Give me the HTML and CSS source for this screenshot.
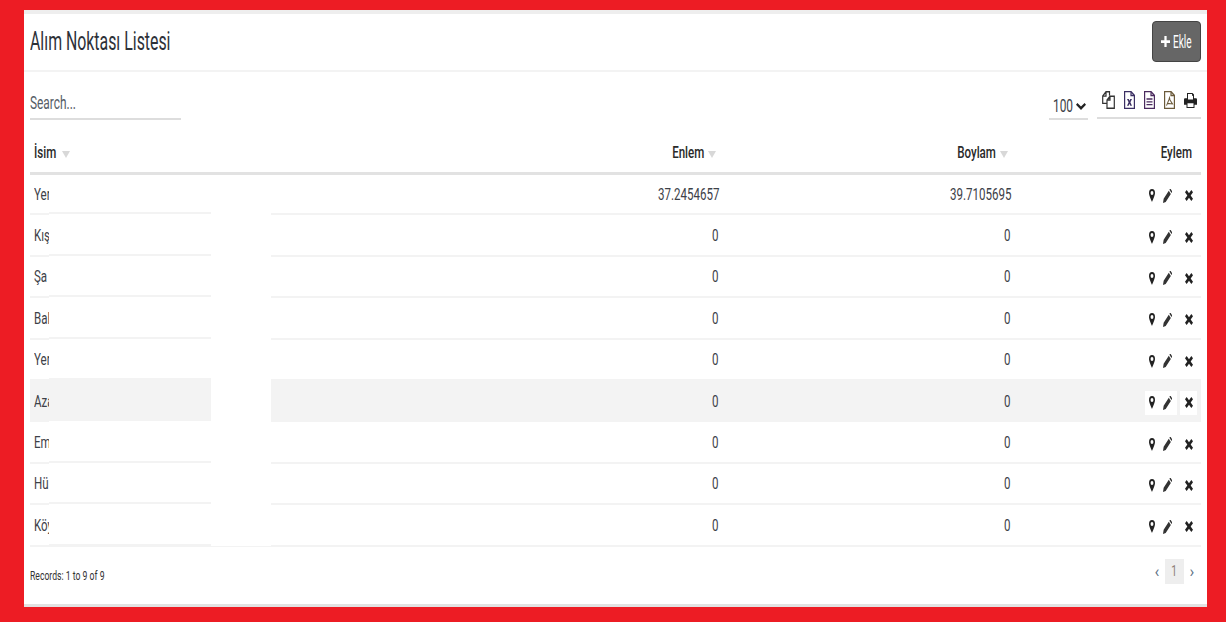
FILE: index.html
```html
<!DOCTYPE html>
<html lang="tr">
<head>
  <meta charset="utf-8">
  <title>Alım Noktası Listesi</title>
  <link rel="stylesheet" href="styles.css">
</head>
<body>
  <svg class="icon-defs" width="0" height="0" aria-hidden="true">
    <symbol id="i-marker" viewBox="0 0 10 16" preserveAspectRatio="none"><path fill-rule="evenodd" d="M5 0a5 5 0 0 1 5 5c0 2.6-3.4 8.300-5 11C3.400 13.300 0 7.600 0 5a5 5 0 0 1 5-5zm0 2.600a2.400 2.400 0 1 0 0 4.800 2.400 2.400 0 0 0 0-4.800z"/></symbol>
    <symbol id="i-pencil" viewBox="0 0 14 14" preserveAspectRatio="none"><path d="M0 14l1-4.200 8-8 3.200 3.200-8 8zM10 .8l.7-.7a1 1 0 0 1 1.300 0l1.900 1.900a1 1 0 0 1 0 1.300l-.7.700z"/></symbol>
    <symbol id="i-times" viewBox="0 0 12 12" preserveAspectRatio="none"><path d="M0 2.500L2.500 0 6 3.500 9.500 0 12 2.500 8.500 6 12 9.500 9.500 12 6 8.500 2.500 12 0 9.500 3.500 6z"/></symbol>
    <symbol id="i-plus" viewBox="0 0 12 12" preserveAspectRatio="none"><path d="M4.500 0h3v4.500H12v3H7.500V12h-3V7.500H0v-3h4.500z"/></symbol>
    <symbol id="i-chevron" viewBox="0 0 12 8" preserveAspectRatio="none"><path d="M0 2l1.700-2L6 4 10.300 0 12 2 6 8z"/></symbol>
    <symbol id="i-copy" viewBox="0 0 13 16" preserveAspectRatio="none"><path fill="none" stroke="currentColor" stroke-width="1.200" d="M4.500 11H.7V4.500L4 .7h3.500V4M4 .7v3.800H.7M5 15.300V8L8 4.700h4.300v10.600zM8 4.700V8H5"/></symbol>
    <symbol id="i-excel" viewBox="0 0 11 16" preserveAspectRatio="none"><path fill="none" stroke="currentColor" stroke-width="1.200" d="M.6.6h6.500l3.300 3.300v11.500H.6zM7 .6V4h3.400"/><path d="M3 7h1.800L5.500 8.600 6.300 7H8L6.400 10 8 13H6.300l-.8-1.700-.8 1.700H3L4.600 10z"/></symbol>
    <symbol id="i-text" viewBox="0 0 11 16" preserveAspectRatio="none"><path fill="none" stroke="currentColor" stroke-width="1.200" d="M.6.6h6.500l3.300 3.300v11.500H.6zM7 .6V4h3.400"/><path d="M2.500 6.500h6v1.200h-6zM2.500 9h6v1.200h-6zM2.500 11.500h6v1.200h-6z"/></symbol>
    <symbol id="i-pdf" viewBox="0 0 11 16" preserveAspectRatio="none"><path fill="none" stroke="currentColor" stroke-width="1.200" d="M.6.6h6.500l3.300 3.300v11.500H.6zM7 .6V4h3.400"/><path fill="none" stroke="currentColor" d="M2.500 13L5 7.500 5.500 6l.5 2 2.500 3.500-5-.5"/></symbol>
    <symbol id="i-print" viewBox="0 0 13 14" preserveAspectRatio="none"><path fill-rule="evenodd" d="M3 0h5.500L10 1.500V5h2a1 1 0 0 1 1 1v5h-2.500v3h-8v-3H0V6a1 1 0 0 1 1-1h2zM4 1v5h5V2.500H8V1zM3.500 9.500V13h6V9.500z"/></symbol>
  </svg>

  <div class="panel">
    <header class="panel-head">
      <h1 class="title"><span class="sq">Alım Noktası Listesi</span></h1>
      <button class="add-btn"><svg class="plus"><use href="#i-plus"/></svg><span class="sq">Ekle</span></button>
    </header>

    <div class="toolbar">
      <div class="search"><span class="sq">Search...</span></div>
      <div class="tools">
        <div class="page-size"><span class="sq">100</span><svg class="chevron"><use href="#i-chevron"/></svg></div>
        <div class="exports">
          <svg class="exp exp-copy"><use href="#i-copy"/></svg>
          <svg class="exp exp-excel"><use href="#i-excel"/></svg>
          <svg class="exp exp-text"><use href="#i-text"/></svg>
          <svg class="exp exp-pdf"><use href="#i-pdf"/></svg>
          <svg class="exp exp-print"><use href="#i-print"/></svg>
        </div>
      </div>
    </div>

    <div class="table-wrap">
      <table class="points">
        <colgroup><col class="c-name"><col class="c-lat"><col class="c-lng"><col class="c-act"></colgroup>
        <thead>
          <tr>
            <th class="left"><span class="sq">İsim</span><i class="sort sort-left"></i></th>
            <th class="num"><span class="sq-r">Enlem</span><i class="sort"></i></th>
            <th class="num"><span class="sq-r">Boylam</span><i class="sort"></i></th>
            <th class="num act-head"><span class="sq-r">Eylem</span></th>
          </tr>
        </thead>
        <tbody id="rows"></tbody>
      </table>
      <div class="redact" id="redact"></div>
    </div>

    <footer class="panel-foot">
      <span class="records"><span class="sq">Records: 1 to 9 of 9</span></span>
      <div class="pager">
        <span class="arrow">‹</span>
        <span class="current"><span class="sq-c">1</span></span>
        <span class="arrow">›</span>
      </div>
    </footer>
  </div>

  <script>
    var points = [
      ['Yer', '37.2454657', '39.7105695'],
      ['Kış', '0', '0'],
      ['Şa', '0', '0'],
      ['Bal', '0', '0'],
      ['Yer', '0', '0'],
      ['Aza', '0', '0'],
      ['Em', '0', '0'],
      ['Hü', '0', '0'],
      ['Köy', '0', '0']
    ];
    var hoverRow = 5;

    var html = '';
    var patch = '';
    points.forEach(function (p, i) {
      var cls = i === hoverRow ? ' class="hover"' : '';
      html += '<tr' + cls + '><td><span class="sq">' + p[0] + '</span></td>' +
        '<td class="num"><span class="sq-r">' + p[1] + '</span></td>' +
        '<td class="num"><span class="sq-r">' + p[2] + '</span></td>' +
        '<td class="actions"><span class="act-group">' +
        '<svg class="a-marker"><use href="#i-marker"/></svg>' +
        '<svg class="a-pencil"><use href="#i-pencil"/></svg></span>' +
        '<span class="act-single"><svg class="a-times"><use href="#i-times"/></svg></span></td></tr>';
      patch += '<div class="patch-row' + (i === hoverRow ? ' hover' : '') + '"></div>';
    });
    document.getElementById('rows').innerHTML = html;
    document.getElementById('redact').innerHTML = patch;
  </script>
</body>
</html>
```

FILE: styles.css
```css
* {
  box-sizing: border-box;
}

html, body {
  height: 100%;
}

body {
  margin: 0;
  padding: 10px 19px 15px 24px;
  background-color: #ed1c24;
  font-family: Roboto, "Liberation Sans", sans-serif;
  color: #333;
  overflow: hidden;
}

.icon-defs {
  position: absolute;
}

.panel {
  height: 597px;
  background-color: #fff;
  border-top: 4px solid #eee;
  border-bottom: 3px solid #e2e2e2;
}

/* the text in the picture is narrow, so every label is squeezed */
.sq, .sq-r, .sq-c {
  display: inline-block;
  transform: scaleX(.68);
  transform-origin: left center;
}

.sq-r {
  transform-origin: right center;
}

.sq-c {
  transform-origin: center;
}

.panel-head {
  height: 58px;
  padding: 7px 6px 0 6px;
  border-bottom: 2px solid #f3f3f3;
  display: flex;
  justify-content: space-between;
  align-items: flex-start;
}

.title {
  margin: 0;
  font-size: 26px;
  font-weight: 400;
  line-height: 41px;
  color: #2d3138;
  white-space: nowrap;
}

.title .sq {
  transform: scaleX(.61);
}

.add-btn {
  width: 49px;
  height: 41px;
  padding: 0 0 0 8px;
  background-color: #666;
  border: 1px solid #444;
  border-radius: 4px;
  color: #fff;
  font-family: inherit;
  font-size: 18px;
  display: flex;
  align-items: center;
  white-space: nowrap;
}

.add-btn .sq {
  transform: scaleX(.56);
}

.plus {
  width: 9px;
  height: 11px;
  fill: #fff;
  margin-right: 3px;
  flex: none;
}

.toolbar {
  height: 50px;
  padding: 0 6px;
  display: flex;
  justify-content: space-between;
}

.search {
  width: 151px;
  height: 48px;
  padding-top: 20px;
  border-bottom: 2px solid #ddd;
  font-size: 18px;
  line-height: 22px;
  color: #555c66;
  white-space: nowrap;
}

.search .sq {
  transform: scaleX(.66);
}

.tools {
  display: flex;
  gap: 9px;
}

.page-size {
  width: 39px;
  height: 48px;
  padding: 23px 0 0 4px;
  border-bottom: 2px solid #ddd;
  font-size: 18px;
  line-height: 22px;
  color: #3d4148;
  display: flex;
  align-items: flex-start;
}

.page-size .sq {
  width: 23px;
  flex: none;
  transform: scaleX(.66);
}

.chevron {
  width: 10px;
  height: 7px;
  margin: 8px 0 0 0;
  fill: #222;
  flex: none;
}

.exports {
  width: 104px;
  height: 47px;
  padding: 19px 4px 0 5px;
  border-bottom: 2px solid #ddd;
  display: flex;
  justify-content: space-between;
}

.exp {
  width: 11px;
  height: 18px;
  color: #333;
  fill: currentColor;
}

.exp-copy {
  width: 13px;
}

.exp-excel {
  color: #3b2f63;
}

.exp-text {
  color: #4a2a5e;
}

.exp-pdf {
  color: #6b5a3a;
}

.exp-print {
  width: 13px;
  height: 15px;
  margin-top: 2px;
  color: #222;
}

.table-wrap {
  position: relative;
  padding: 0 6px;
}

.points {
  width: 100%;
  border-collapse: collapse;
  table-layout: fixed;
  font-size: 17px;
}

.c-name { width: 400px; }
.c-lat { width: 293px; }
.c-lng { width: 292px; }
.c-act { width: 186px; }

th {
  height: 51px;
  padding: 11px 4px 0;
  border-bottom: 3px solid #e2e2e2;
  font-weight: 500;
  color: #2a2a2a;
  white-space: nowrap;
}

th.left {
  text-align: left;
}

th.num {
  padding-right: 7px;
}

th.act-head {
  padding-right: 9px;
}

.sort {
  display: inline-block;
  width: 0;
  height: 0;
  margin-left: 4px;
  border-left: 4px solid transparent;
  border-right: 4px solid transparent;
  border-top: 7px solid #d8d8d8;
}

.sort-left {
  margin-left: -5px;
}

td {
  height: 41.4px;
  padding: 0 4px;
  border-bottom: 2px solid #f3f3f3;
  color: #3d4148;
  white-space: nowrap;
  overflow: hidden;
}

.num {
  text-align: right;
}

tr.hover td {
  background-color: #f3f3f3;
}

td.actions {
  text-align: right;
  padding: 4px 4px 0;
  font-size: 0;
}

.act-group, .act-single {
  display: inline-flex;
  align-items: center;
  height: 24px;
  vertical-align: middle;
}

.act-group {
  width: 32px;
  padding-left: 4px;
  gap: 8px;
  margin-right: 3px;
}

.act-single {
  width: 17px;
  justify-content: center;
}

tr.hover .act-group, tr.hover .act-single {
  background-color: #fff;
}

.a-marker {
  width: 6px;
  height: 13px;
  fill: #222;
}

.a-pencil {
  width: 9px;
  height: 14px;
  fill: #333;
}

.a-times {
  width: 8px;
  height: 11px;
  fill: #222;
}

/* white patch pasted over the name column */
.redact {
  position: absolute;
  top: 53px;
  left: 25px;
  width: 222px;
  background-color: #fff;
}

.patch-row {
  width: 162px;
  height: 41.4px;
  border-bottom: 2px solid #f3f3f3;
}

.patch-row:first-child {
  height: 39.4px;
}

.patch-row.hover {
  background-color: #f3f3f3;
  border-bottom-color: #f3f3f3;
}

.panel-foot {
  padding: 12px 11px 0 6px;
  display: flex;
  justify-content: space-between;
}

.records {
  margin-top: 8px;
  font-size: 12px;
  line-height: 18px;
  color: #333;
  white-space: nowrap;
}

.records .sq {
  transform: scaleX(.72);
}

.pager {
  display: flex;
  align-items: center;
  height: 25px;
  font-size: 16px;
  color: #5b7083;
}

.arrow {
  width: 8px;
  text-align: center;
}

.current {
  width: 19px;
  height: 25px;
  margin: 0 4px;
  background-color: #eee;
  color: #8f8078;
  text-align: center;
  line-height: 25px;
  font-size: 15px;
}
```
